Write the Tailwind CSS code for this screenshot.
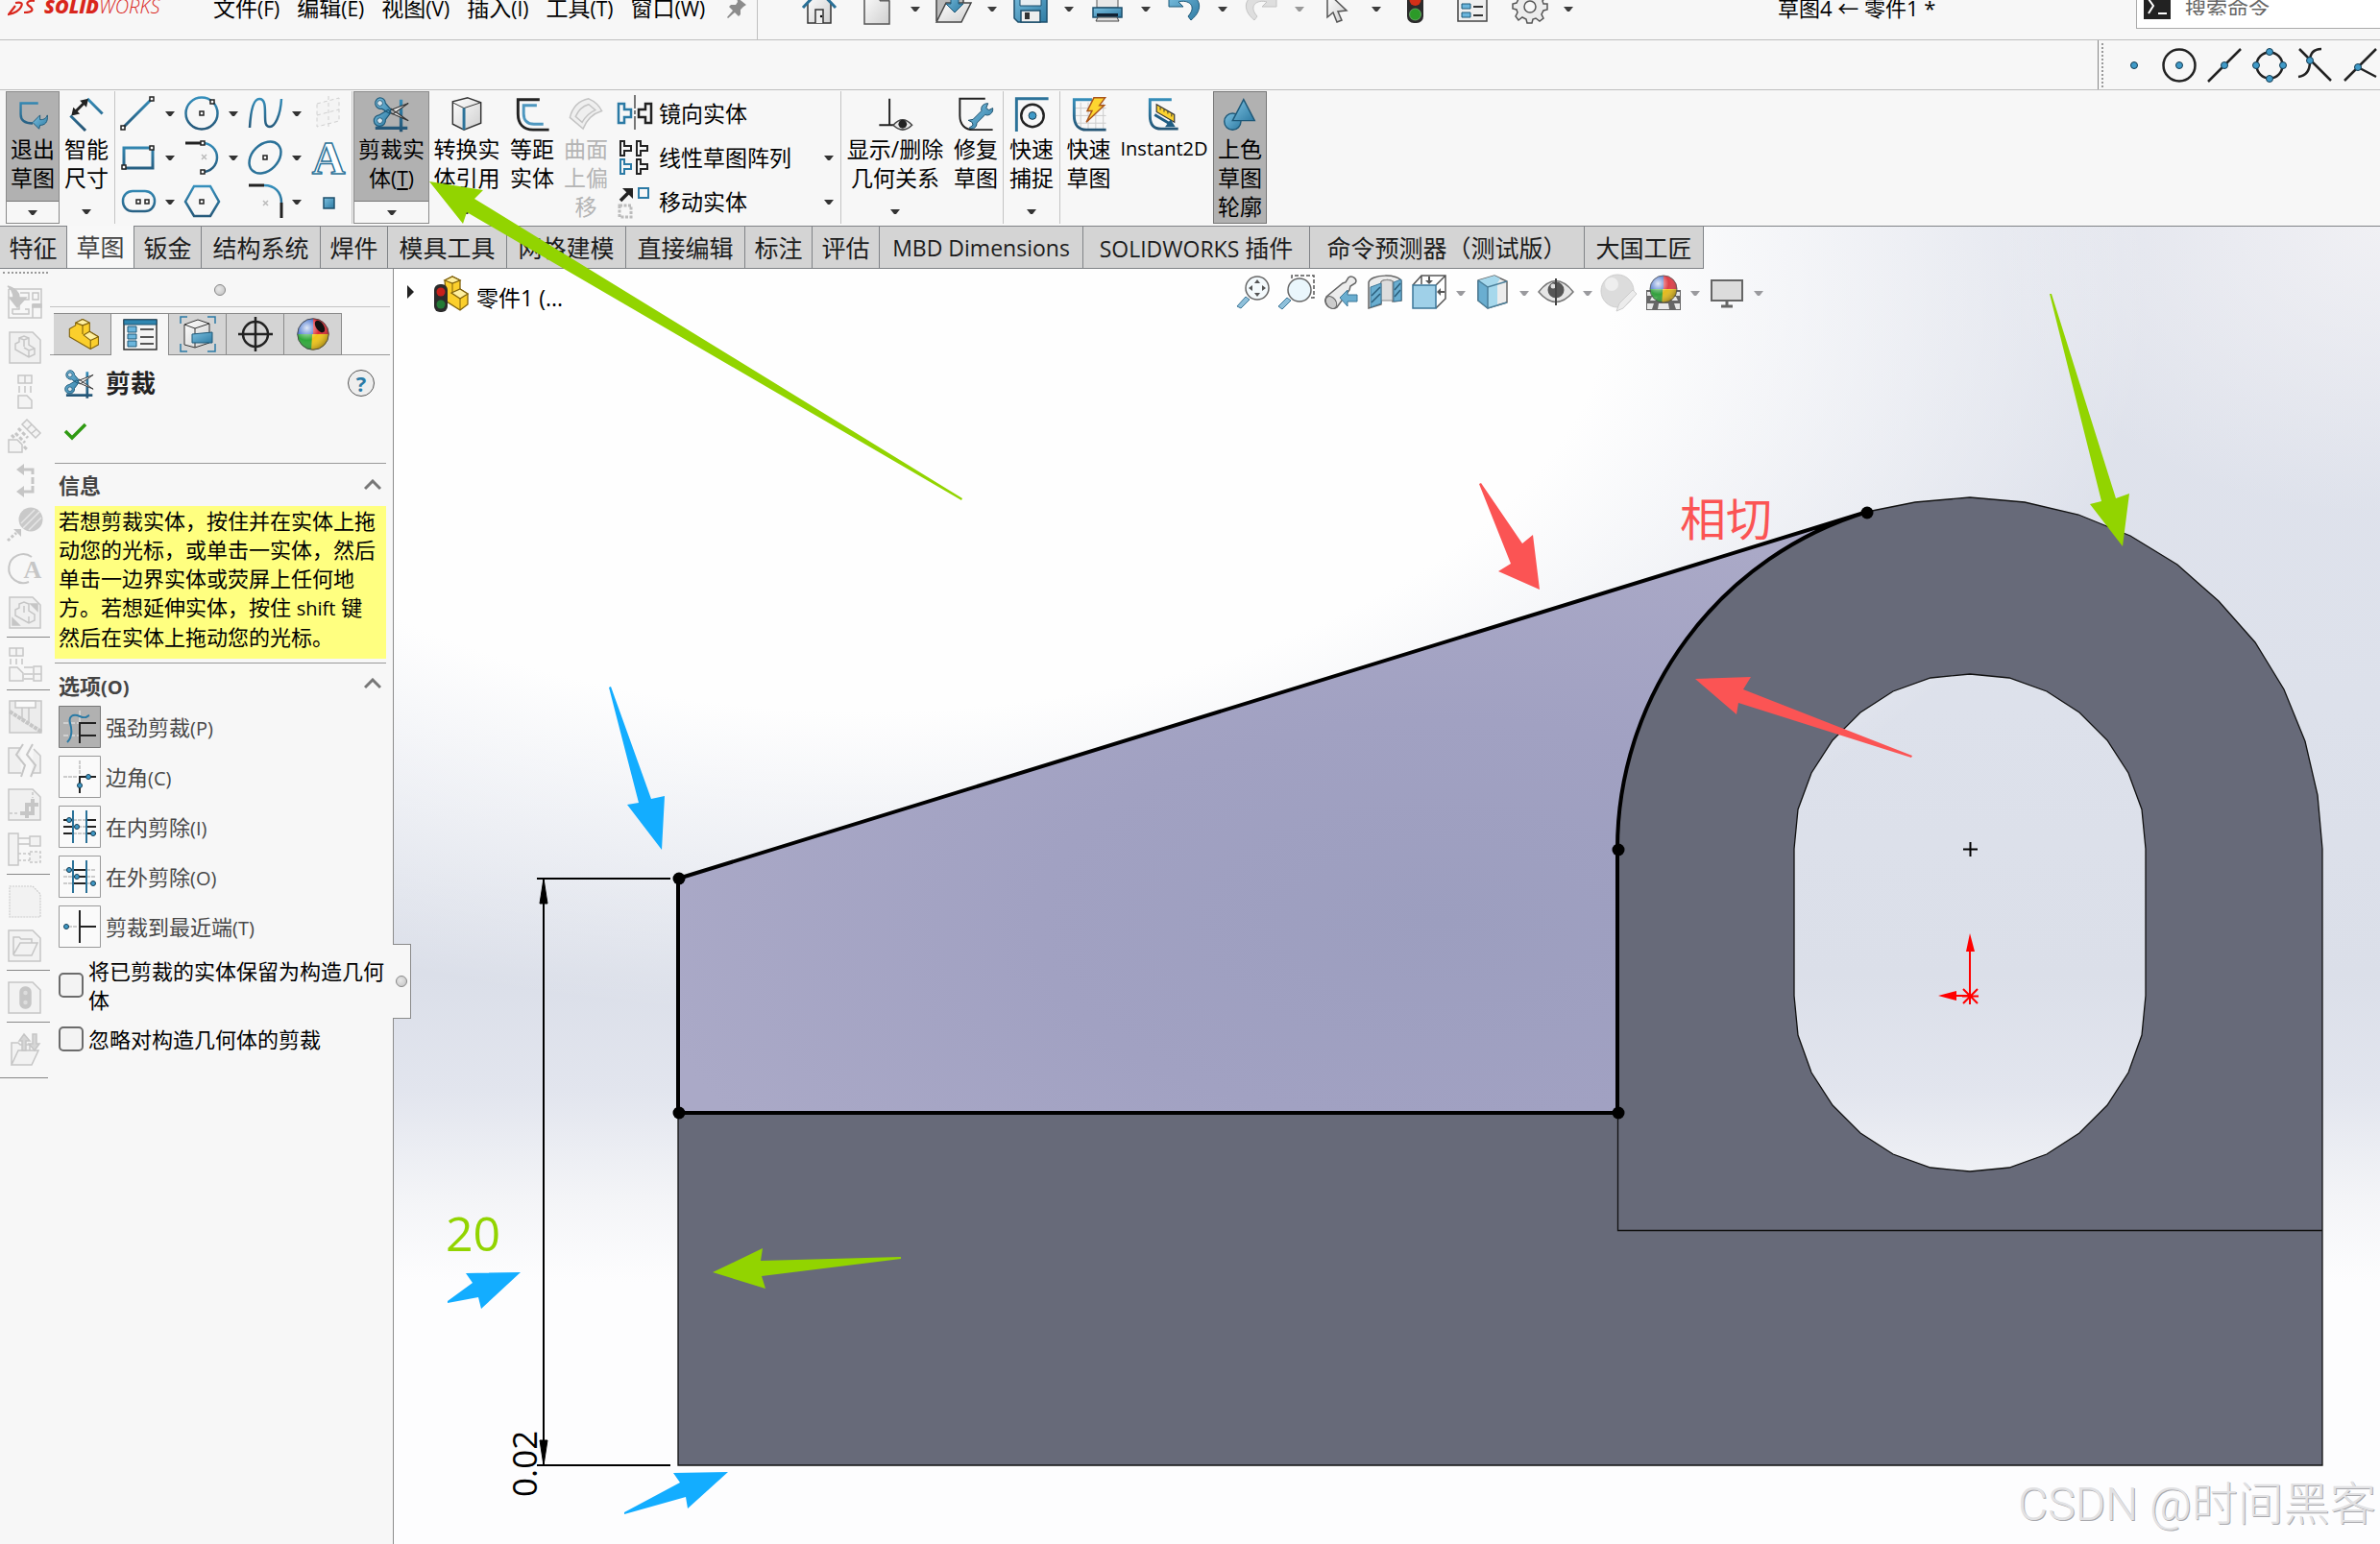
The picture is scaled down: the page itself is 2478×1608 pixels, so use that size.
<!DOCTYPE html>
<html lang="zh-CN">
<head>
<meta charset="utf-8">
<title>SOLIDWORKS 草图4 零件1</title>
<script src="https://cdn.jsdelivr.net/npm/@tailwindcss/browser@4"></script>
</head>
<body class="bg-[#f7f7f7] font-['Open_Sans','Noto_Sans_CJK_SC',sans-serif] text-black">
<svg class="absolute h-0 w-0" aria-hidden="true">
  <defs>
    <linearGradient id="b" gradientUnits="userSpaceOnUse" x1="0" y1="6" x2="0" y2="42"><stop offset="0" stop-color="#3590bd"/><stop offset="1" stop-color="#245373"/></linearGradient>
    <linearGradient id="bf" x1="0" y1="0" x2="1" y2="1"><stop offset="0" stop-color="#7cc0e0"/><stop offset="1" stop-color="#2e7ba3"/></linearGradient>
    <linearGradient id="gf" x1="0" y1="0" x2="1" y2="1"><stop offset="0" stop-color="#fff"/><stop offset="1" stop-color="#cfcfcf"/></linearGradient>
    <radialGradient id="sh" cx=".3" cy=".3" r=".8"><stop offset="0" stop-color="#fff" stop-opacity=".85"/><stop offset=".5" stop-color="#fff" stop-opacity="0"/><stop offset="1" stop-color="#000" stop-opacity=".35"/></radialGradient>
    <radialGradient id="knob" cx=".4" cy=".4" r=".7"><stop offset="0" stop-color="#e8e8e8"/><stop offset="1" stop-color="#c4c4c4"/></radialGradient>
    <radialGradient id="pur" gradientUnits="userSpaceOnUse" cx="1500" cy="960" r="420" gradientTransform="translate(1500 960) scale(2 1) translate(-1500 -960)"><stop offset="0" stop-color="#9c9ebf"/><stop offset=".5" stop-color="#a1a1c2"/><stop offset="1" stop-color="#aaa9c7"/></radialGradient>
  </defs>
  <symbol id="dn" viewBox="0 0 10 5"><path d="M0 0H10L6 5H4Z" fill="currentColor"/></symbol>
  <symbol id="scissors" viewBox="0 0 46 46">
    <path d="M33 8V43M5 39H40" stroke="url(#b)" stroke-width="3.5" fill="none"/>
    <path d="M18 21L41 12L24 24ZM18 21L41 31L22 18Z" fill="#eee" stroke="#333" stroke-width="1.2"/>
    <path d="M10 6a6 6 0 0 1 6 6l6 7-2 4-8-5a6 6 0 1 1-2-12zM10 37a6 6 0 0 1-1-12l10-6 3 3-6 8a6 6 0 0 1-6 7z" fill="url(#bf)" stroke="#1d5878" stroke-width="1.2"/>
    <circle cx="10" cy="12" r="3" fill="#d8e6ee" stroke="#1d5878"/><circle cx="10" cy="31" r="3" fill="#d8e6ee" stroke="#1d5878"/>
  </symbol>
  <symbol id="part" viewBox="0 0 46 46">
    <path d="M15 10L23 6L31 10V20L41 26V35L32 40L8 26V17L15 13Z" fill="#fbcf2c" stroke="#80620c" stroke-width="1.2" stroke-linejoin="round"/>
    <path d="M15 10L23 13L31 10L23 6ZM24 24L31 20L41 26L32 30Z" fill="#fff0a0" stroke="#80620c" stroke-width="1.2" stroke-linejoin="round"/>
    <path d="M23 13V23M32 30V40" stroke="#80620c" stroke-width="1.2"/>
  </symbol>
  <symbol id="ball" viewBox="0 0 46 46">
    <path d="M23 23V6A17 17 0 0 0 6 24Z" fill="#2f62c8"/><path d="M23 23V6A17 17 0 0 1 40 24Z" fill="#dc2a34"/>
    <path d="M23 23H6A17 17 0 0 0 22 40Z" fill="#2fa83a"/><path d="M22 23H40A17 17 0 0 1 21 40Z" fill="#f0c416"/>
    <circle cx="23" cy="23" r="17" fill="url(#sh)" stroke="#444"/>
  </symbol>
</svg>

<div class="relative flex min-h-screen flex-col overflow-hidden">

  <!-- Title bar -->
  <header class="flex h-[42px] items-start border-b border-[#bfbfbf]">
    <div class="flex h-[14px] w-[222px] shrink-0 items-center pl-2 text-[#d9261c]">
      <svg class="h-[34px] w-[30px] shrink-0" viewBox="0 0 30 34" fill="none" stroke="#d9261c" stroke-width="2.2"><path d="M8 13C14 12 16 13 14 17C12 21 6 24 1 25L8 16M28 11C22 10 18 13 22 16C28 20 26 23 17 23"/></svg>
      <span class="ml-2 text-xl leading-6 italic"><b class="font-extrabold">SOLID</b><span class="font-light">WORKS</span></span>
    </div>
    <nav class="flex h-[17px] w-[514px] shrink-0 items-center gap-[18px] text-[23px] leading-8 whitespace-nowrap">
      <a href="#">文件<span class="text-[21px]">(F)</span></a>
      <a href="#">编辑<span class="text-[21px]">(E)</span></a>
      <a href="#">视图<span class="text-[21px]">(V)</span></a>
      <a href="#">插入<span class="text-[21px]">(I)</span></a>
      <a href="#">工具<span class="text-[21px]">(T)</span></a>
      <a href="#">窗口<span class="text-[21px]">(W)</span></a>
    </nav>
    <div class="flex h-[41px] w-[53px] shrink-0 items-start justify-center border-r border-[#bfbfbf] pl-2">
      <svg class="h-6 w-6" viewBox="0 0 24 24" fill="#8c8c8c"><path d="M13 -3L23 5L20 7L17 10L17 15L15 17L11 13L4 19L3 18L9 11L5 7L7 5L12 5L14 2Z"/></svg>
    </div>
    <div class="flex h-[18px] w-[840px] shrink-0 items-center pl-[24px] text-[#3c3c3c]">
      <button aria-label="主页" class="w-20 shrink-0"><svg class="mx-auto h-[52px] w-10" viewBox="0 -17 40 52"><path d="M8 3L20 -8L32 3V24H8Z" fill="url(#gf)" stroke="#333" stroke-width="1.5"/><path d="M16 24V10H24V24" fill="#eee" stroke="#333" stroke-width="1.5"/><path d="M3 8L20 -10L37 8" fill="none" stroke="#286f96" stroke-width="3"/><circle cx="22" cy="17" r="1.2"/></svg></button>
      <button aria-label="新建" class="w-10 shrink-0"><svg class="h-[52px] w-10" viewBox="0 -17 40 52"><path d="M7 -10H24L33 1V25H7Z" fill="url(#gf)" stroke="#555" stroke-width="1.5"/><path d="M23 -8V1H33" fill="#777" stroke="#555"/></svg></button>
      <span class="flex w-10 shrink-0 justify-center"><svg class="h-[5px] w-[10px]"><use href="#dn"/></svg></span>
      <button aria-label="打开" class="w-10 shrink-0"><svg class="h-[52px] w-10" viewBox="0 -17 40 52"><path d="M2 22V-6H30V4" fill="#bbb" stroke="#444" stroke-width="1.5"/><path d="M2 23L12 3H38L28 23Z" fill="url(#gf)" stroke="#444" stroke-width="1.5"/><path d="M17 -8H25V4H30L21 13L12 4H17Z" fill="url(#bf)" stroke="#1d5878"/></svg></button>
      <span class="flex w-10 shrink-0 justify-center"><svg class="h-[5px] w-[10px]"><use href="#dn"/></svg></span>
      <button aria-label="保存" class="w-10 shrink-0"><svg class="h-[52px] w-10" viewBox="0 -17 40 52"><path d="M3 -10H37V23H7L3 19Z" fill="url(#bf)" stroke="#1d4f6c" stroke-width="1.5"/><path d="M9 -8H31V6H9Z" fill="#e8eef2" stroke="#1d4f6c"/><path d="M10 11H30V23H10Z" fill="#eee" stroke="#1d4f6c" stroke-width="1.5"/><path d="M14 13H19V20H14Z" fill="#333"/></svg></button>
      <span class="flex w-10 shrink-0 justify-center"><svg class="h-[5px] w-[10px]"><use href="#dn"/></svg></span>
      <button aria-label="打印" class="w-10 shrink-0"><svg class="h-[52px] w-10" viewBox="0 -17 40 52"><path d="M9 -10H31V8H9Z" fill="#e8e8e8" stroke="#555"/><path d="M5 8H35V18H5Z" fill="url(#bf)" stroke="#1d4f6c" stroke-width="1.5"/><path d="M9 14H31V17H9Z" fill="#123"/><path d="M10 18H30L32 22H8Z" fill="#ddd" stroke="#444"/></svg></button>
      <span class="flex w-10 shrink-0 justify-center"><svg class="h-[5px] w-[10px]"><use href="#dn"/></svg></span>
      <button aria-label="撤消" class="w-10 shrink-0"><svg class="h-[52px] w-10" viewBox="0 -17 40 52"><path d="M4 -8V7H19L14 2C24 -1 34 6 24 17L27 21C42 9 36 -6 20 -6L10 -3Z" fill="url(#bf)" stroke="#1d5878"/></svg></button>
      <span class="flex w-10 shrink-0 justify-center"><svg class="h-[5px] w-[10px]"><use href="#dn"/></svg></span>
      <button aria-label="重做" class="w-10 shrink-0"><svg class="h-[52px] w-10" viewBox="0 -17 40 52"><path d="M36 -8V7H21L26 2C16 -1 6 6 16 17L13 21C-2 9 4 -6 20 -6L30 -3Z" fill="#dedede" stroke="#c4c4c4"/></svg></button>
      <span class="flex w-10 shrink-0 justify-center text-[#999]"><svg class="h-[5px] w-[10px]"><use href="#dn"/></svg></span>
      <button aria-label="选择" class="w-10 shrink-0"><svg class="h-[52px] w-10" viewBox="0 -17 40 52"><path d="M9 -8V18L15 13L19 23L24 21L20 12L29 11Z" fill="url(#gf)" stroke="#555" stroke-width="1.5"/></svg></button>
      <span class="flex w-10 shrink-0 justify-center"><svg class="h-[5px] w-[10px]"><use href="#dn"/></svg></span>
      <button aria-label="重建" class="w-10 shrink-0"><svg class="h-[52px] w-10" viewBox="0 -17 40 52"><rect x="12" y="-14" width="17" height="38" rx="7" fill="#2b2b2b"/><circle cx="20.500" cy="0" r="6" fill="#d33018"/><circle cx="20.500" cy="15" r="6" fill="#2c9a28" stroke="#8c8" stroke-width=".6"/></svg></button>
      <button aria-label="文件属性" class="w-20 shrink-0"><svg class="mx-auto h-[52px] w-10" viewBox="0 -17 40 52"><path d="M5 -10H35V22H5Z" fill="#f0f0f0" stroke="#444" stroke-width="1.500"/><path d="M9 4H18V9H9ZM9 13H18V18H9Z" fill="#6bb5dc" stroke="#1d5878"/><path d="M21 7H31M21 16H31" stroke="#333" stroke-width="2"/></svg></button>
      <button aria-label="选项" class="w-10 shrink-0"><svg class="h-[52px] w-10" viewBox="0 -17 40 52"><path d="M17 -10H23L24 -6L28 -4L32 -7L36 -3L33 1L34 4H38V10L34 11L32 15L34 19L30 22L26 19L23 20L22 24H17L16 20L12 18L8 21L5 17L7 13L6 10L2 9V4L6 3L8 -1L5 -4L9 -8L13 -5L16 -6Z" fill="#ececec" stroke="#555" stroke-width="1.5"/><circle cx="20" cy="7" r="6" fill="#f7f7f7" stroke="#555" stroke-width="1.5"/></svg></button>
      <span class="flex w-10 shrink-0 justify-center"><svg class="h-[5px] w-[10px]"><use href="#dn"/></svg></span>
    </div>
    <p class="ml-[222px] h-4 shrink-0 text-[22px] leading-4 whitespace-nowrap">草图4 ← 零件1 *</p>
    <div class="ml-auto flex h-[30px] w-[254px] shrink-0 items-start border-b border-l border-[#aaa] bg-white pl-[7px]">
      <svg class="h-5 w-7 shrink-0" viewBox="0 0 28 20"><path d="M0 0H28V20H0Z" fill="#222"/><path d="M5 -1L10 6L5 14" stroke="#fff" stroke-width="2" fill="none"/><path d="M15 14H24" stroke="#fff" stroke-width="2"/></svg>
      <input type="text" aria-label="搜索命令" placeholder="搜索命令" class="ml-[15px] h-4 w-48 text-[22px] leading-4 outline-none placeholder:text-[#666]">
    </div>
  </header>

  <!-- Snap toolbar -->
  <div class="flex h-[52px] justify-end border-b border-[#bfbfbf]">
    <div class="flex w-[294px] items-center border-l border-[#888] pl-[3px]">
      <span class="h-[46px] border-l-2 border-dotted border-[#999]"></span>
      <div class="ml-2 flex">
        <button aria-label="点" class="w-[47px]"><svg class="mx-auto h-[46px] w-[46px]" viewBox="0 0 46 46"><circle cx="23" cy="23" r="3.500" fill="#3f9ac8" stroke="#153c52"/></svg></button>
        <button aria-label="圆心" class="w-[47px]"><svg class="mx-auto h-[46px] w-[46px]" viewBox="0 0 46 46"><circle cx="23" cy="23" r="16.500" fill="none" stroke="#222" stroke-width="2.500"/><circle cx="23" cy="23" r="3.500" fill="#3f9ac8" stroke="#153c52"/></svg></button>
        <button aria-label="中点" class="w-[47px]"><svg class="mx-auto h-[46px] w-[46px]" viewBox="0 0 46 46"><path d="M6 40L40 6" stroke="#222" stroke-width="2.500"/><circle cx="23" cy="23" r="3.500" fill="#3f9ac8" stroke="#153c52"/></svg></button>
        <button aria-label="象限点" class="w-[47px]"><svg class="mx-auto h-[46px] w-[46px]" viewBox="0 0 46 46"><circle cx="23" cy="23" r="13.500" fill="none" stroke="#222" stroke-width="2.500"/><g fill="#3f9ac8" stroke="#153c52"><circle cx="23" cy="9" r="3.500"/><circle cx="23" cy="37" r="3.500"/><circle cx="9" cy="23" r="3.500"/><circle cx="37" cy="23" r="3.500"/></g></svg></button>
        <button aria-label="交叉点" class="w-[47px]"><svg class="mx-auto h-[46px] w-[46px]" viewBox="0 0 46 46"><path d="M7 6L40 39M6 35C14 34 18 28 18 19C18 10 22 6 30 6" fill="none" stroke="#222" stroke-width="2.500"/><circle cx="18" cy="18" r="3.500" fill="#3f9ac8" stroke="#153c52"/></svg></button>
        <button aria-label="最近端点" class="w-[47px]"><svg class="mx-auto h-[46px] w-[46px]" viewBox="0 0 46 46"><path d="M7 39L40 6M21 25L40 35" stroke="#222" stroke-width="2.500"/><circle cx="21" cy="25" r="3.500" fill="#3f9ac8" stroke="#153c52"/></svg></button>
      </div>
    </div>
  </div>

  <!-- Command ribbon -->
  <div class="flex h-[142px] items-start border-b border-[#808387] pt-px pl-[6px] text-[23px] leading-[30px] whitespace-nowrap text-black">
    <div class="flex h-[138px] w-[56px] shrink-0 flex-col border border-[#8a8a8a]">
      <button class="flex h-[114px] flex-col items-center border-b border-[#777] bg-[#b1b1b1]"><svg class="h-[44px] w-[46px] shrink-0" viewBox="0 0 46 46"><path d="M29 12H10V24C10 31 14 34 23 34" fill="none" stroke="url(#b)" stroke-width="2.5"/><path d="M23 33L31 25V30C36 30 38 28 39 25C40 33 36 36 31 36L30 40Z" fill="url(#bf)" stroke="#1d5878"/></svg>退出<br>草图</button>
      <button aria-label="退出选项" class="flex flex-1 items-center justify-center text-[#333]"><svg class="h-[5px] w-[10px]"><use href="#dn"/></svg></button>
    </div>
    <button class="flex h-[138px] w-[56px] shrink-0 flex-col items-center"><svg class="h-[45px] w-[46px] shrink-0" viewBox="0 0 46 46"><path d="M24 8L40 24M6 26L22 42" stroke="url(#b)" stroke-width="3"/><path d="M11 22L21 12" stroke="#222" stroke-width="3"/><path d="M7 26L9 17L16 24ZM25 8L23 17L16 10Z" fill="#222"/></svg>智能<br>尺寸<svg class="mt-[18px] h-[5px] w-[10px] text-[#333]"><use href="#dn"/></svg></button>
    <div class="ml-px grid h-[138px] shrink-0 grid-cols-[48px_18px_48px_18px_48px_18px_48px] items-center justify-items-center border-x border-[#c4c4c4] text-[#333]">
      <button aria-label="直线"><svg class="h-[46px] w-[46px]" viewBox="0 0 46 46"><path d="M7 38L37 8" stroke="url(#b)" stroke-width="3"/><path d="M5 36h4v4h-4zM35 6h4v4h-4z" fill="#fff" stroke="#222" stroke-width="1.500"/></svg></button>
      <svg class="h-[5px] w-[10px]"><use href="#dn"/></svg>
      <button aria-label="圆"><svg class="h-[46px] w-[46px]" viewBox="0 0 46 46"><circle cx="23" cy="23" r="16.500" fill="none" stroke="url(#b)" stroke-width="2.500"/><path d="M32 9h4v4h-4zM21 21h4v4h-4z" fill="#fff" stroke="#222" stroke-width="1.500"/></svg></button>
      <svg class="h-[5px] w-[10px]"><use href="#dn"/></svg>
      <button aria-label="样条曲线"><svg class="h-[46px] w-[46px]" viewBox="0 0 46 46"><path d="M7 38C8 20 11 8 17 8S23 16 23 24S23 37 28 37S39 26 40 8" fill="none" stroke="url(#b)" stroke-width="2.500"/></svg></button>
      <svg class="h-[5px] w-[10px]"><use href="#dn"/></svg>
      <button aria-label="基准面"><svg class="h-[46px] w-[46px]" viewBox="0 0 46 46"><path d="M11 13L34 7V31L11 37ZM11 25L34 19M23 5V39" fill="#f4f4f4" stroke="#d0d0d0" stroke-dasharray="4 3"/></svg></button>
      <button aria-label="矩形"><svg class="h-[46px] w-[46px]" viewBox="0 0 46 46"><path d="M8 13H38V34H8Z" fill="none" stroke="url(#b)" stroke-width="3"/><path d="M6 31h4v4h-4zM35 11h4v4h-4z" fill="#fff" stroke="#222" stroke-width="1.500"/></svg></button>
      <svg class="h-[5px] w-[10px]"><use href="#dn"/></svg>
      <button aria-label="圆弧"><svg class="h-[46px] w-[46px]" viewBox="0 0 46 46"><path d="M6 8H24" stroke="#222" stroke-width="3"/><path d="M24 8A15 15 0 0 1 24 38" fill="none" stroke="url(#b)" stroke-width="2.500"/><path d="M22 6h4v4h-4zM22 36h4v4h-4z" fill="#fff" stroke="#222" stroke-width="1.500"/><path d="M23 20l5 5m0-5l-5 5" stroke="#bbb" stroke-width="1.500"/></svg></button>
      <svg class="h-[5px] w-[10px]"><use href="#dn"/></svg>
      <button aria-label="椭圆"><svg class="h-[46px] w-[46px]" viewBox="0 0 46 46"><ellipse cx="23" cy="23" rx="19" ry="13.500" transform="rotate(-45 23 23)" fill="none" stroke="#2b7299" stroke-width="2.500"/><path d="M21 21h4v4h-4z" fill="#fff" stroke="#222" stroke-width="1.500"/></svg></button>
      <svg class="h-[5px] w-[10px]"><use href="#dn"/></svg>
      <button aria-label="文字"><svg class="h-[46px] w-[46px]" viewBox="0 0 46 46"><text x="23" y="40" text-anchor="middle" font-family="Liberation Serif,serif" font-weight="bold" font-size="48" fill="#fff" stroke="#2b7299" stroke-width="1.500">A</text></svg></button>
      <button aria-label="槽口"><svg class="h-[46px] w-[46px]" viewBox="0 0 46 46"><rect x="7" y="12" width="33" height="21" rx="10" fill="none" stroke="url(#b)" stroke-width="2.500"/><path d="M21 21h4v4h-4zM30 21h4v4h-4z" fill="#fff" stroke="#222" stroke-width="1.500"/></svg></button>
      <svg class="h-[5px] w-[10px]"><use href="#dn"/></svg>
      <button aria-label="多边形"><svg class="h-[46px] w-[46px]" viewBox="0 0 46 46"><path d="M6 23L15 7H32L41 23L32 38H15Z" fill="none" stroke="url(#b)" stroke-width="2.500"/><path d="M21 21h4v4h-4z" fill="#fff" stroke="#222" stroke-width="1.500"/></svg></button>
      <span></span>
      <button aria-label="圆角"><svg class="h-[46px] w-[46px]" viewBox="0 0 46 46"><path d="M6 6H22M40 24V40" stroke="#222" stroke-width="3"/><path d="M22 6C33 6 40 13 40 24" fill="none" stroke="url(#b)" stroke-width="2.500"/><path d="M21 22l5 5m0-5l-5 5" stroke="#bbb" stroke-width="1.500"/></svg></button>
      <svg class="h-[5px] w-[10px]"><use href="#dn"/></svg>
      <button aria-label="点"><svg class="h-[46px] w-[46px]" viewBox="0 0 46 46"><path d="M18 19h11v11h-11z" fill="url(#bf)" stroke="#1d4f6c" stroke-width="1.500"/></svg></button>
    </div>
    <div class="ml-px flex h-[138px] w-[79px] shrink-0 flex-col border border-[#8a8a8a]">
      <button class="flex h-[114px] flex-col items-center border-b border-[#777] bg-[#b1b1b1]"><svg class="h-[44px] w-[46px] shrink-0"><use href="#scissors"/></svg>剪裁实<span>体<span class="text-[21px]">(<u class="underline-offset-2">T</u>)</span></span></button>
      <button aria-label="剪裁选项" class="flex flex-1 items-center justify-center text-[#333]"><svg class="h-[5px] w-[10px]"><use href="#dn"/></svg></button>
    </div>
    <button class="flex h-[138px] w-[78px] shrink-0 flex-col items-center"><svg class="h-[45px] w-[46px] shrink-0" viewBox="0 0 46 46"><path d="M24 7L38 12V34L20 41L8 35V11Z" fill="url(#gf)" stroke="#333" stroke-width="1.500"/><path d="M8 12L20 18L38 12" fill="none" stroke="#333"/><path d="M20 18V41" stroke="#2b7299" stroke-width="3"/></svg>转换实<br>体引用<svg class="mt-[18px] h-[5px] w-[10px] text-[#333]"><use href="#dn"/></svg></button>
    <button class="flex h-[138px] w-[58px] shrink-0 flex-col items-center"><svg class="h-[45px] w-[46px] shrink-0" viewBox="0 0 46 46" fill="none" stroke-width="3"><path d="M31 9H8V24C8 35 14 41 24 41H41" stroke="#222"/><path d="M28 15H14V24C14 31 18 35 25 35H35" stroke="#4e97bf"/></svg>等距<br>实体</button>
    <button class="flex h-[138px] w-[54px] shrink-0 flex-col items-center text-[#b4b4b4]" disabled><svg class="h-[45px] w-[46px] shrink-0" viewBox="0 0 46 46" fill="#efefef" stroke="#c4c4c4" stroke-width="1.500"><path d="M26 8C33 11 37 15 40 21C30 24 24 30 20 40L6 28C9 16 16 10 26 8Z"/><path d="M26 14L33 20C26 23 22 28 19 33L12 27C15 20 19 16 26 14Z"/></svg>曲面<br>上偏<br>移</button>
    <div class="grid h-[138px] w-[239px] shrink-0 grid-rows-3 border-r border-[#c4c4c4]">
      <div class="flex items-center"><button class="flex items-center gap-[3px]"><svg class="h-[46px] w-[46px]" viewBox="0 0 46 46" fill="none" stroke-width="2.500"><path d="M7 13h6v6h7v8h-7v6h-6z" stroke="#2b7aa5"/><path d="M41 13h-6v6h-7v8h7v6h6z" stroke="#222"/><path d="M24 4V42" stroke="#222" stroke-width="1.200" stroke-dasharray="14 2 4 2"/></svg>镜向实体</button></div>
      <div class="flex items-center"><button class="flex items-center gap-[3px]"><svg class="h-[46px] w-[46px]" viewBox="0 0 46 46" fill="none" stroke="#222" stroke-width="2"><path d="M9 6h4v5h7v5h-7v5h-4zM26 6h4v5h7v5h-7v5h-4zM26 25h4v5h7v5h-7v5h-4z"/><path d="M9 25h4v5h7v5h-7v5h-4z" stroke="#2b7aa5"/></svg>线性草图阵列</button><span class="ml-auto flex w-6 justify-center text-[#333]"><svg class="h-[5px] w-[10px]"><use href="#dn"/></svg></span></div>
      <div class="flex items-center"><button class="flex items-center gap-[3px]"><svg class="h-[46px] w-[46px]" viewBox="0 0 46 46" fill="none"><path d="M9 22L17 14" stroke="#222" stroke-width="3.500"/><path d="M11 9H22V20Z" fill="#222"/><path d="M28 9h10v10h-10z" stroke="#2b7aa5" stroke-width="2"/><path d="M8 27h12v12h-12z" stroke="#bcbcbc" stroke-width="3" stroke-dasharray="3 1.500"/></svg>移动实体</button><span class="ml-auto flex w-6 justify-center text-[#333]"><svg class="h-[5px] w-[10px]"><use href="#dn"/></svg></span></div>
    </div>
    <button class="flex h-[138px] w-[112px] shrink-0 flex-col items-center"><svg class="h-[45px] w-[46px] shrink-0" viewBox="0 0 46 46"><path d="M17 8V36M6 36H24" stroke="#222" stroke-width="2"/><path d="M21 36Q31 25 41 36Q31 46 21 36Z" fill="#e8e8e8" stroke="#444" stroke-width="1.500"/><circle cx="31" cy="35" r="4.500" fill="#222"/></svg>显示/删除<span>几何关系</span><svg class="mt-[18px] h-[5px] w-[10px] text-[#333]"><use href="#dn"/></svg></button>
    <button class="flex h-[138px] w-[57px] shrink-0 flex-col items-center border-r border-[#c4c4c4]"><svg class="h-[45px] w-[46px] shrink-0" viewBox="0 0 46 46"><path d="M33 8H6V26C6 36 12 41 20 41H41" fill="none" stroke="#222" stroke-width="2"/><path d="M15 31L20 30L29 21C28 16 31 13 36 13L34 18L37 20L41 18C42 23 37 27 33 25L24 34C24 39 20 41 16 39L20 36L19 33Z" fill="url(#bf)" stroke="#1d4f6c"/></svg>修复<br>草图</button>
    <button class="flex h-[138px] w-[59px] shrink-0 flex-col items-center border-r border-[#c4c4c4]"><svg class="h-[45px] w-[46px] shrink-0" viewBox="0 0 46 46"><path d="M7 43V8H41" fill="none" stroke="#2b7299" stroke-width="3"/><circle cx="24" cy="26" r="12" fill="none" stroke="#222" stroke-width="2.500"/><circle cx="24" cy="26" r="4" fill="#3f9ac8" stroke="#153c52"/></svg>快速<br>捕捉<svg class="mt-[18px] h-[5px] w-[10px] text-[#333]"><use href="#dn"/></svg></button>
    <button class="flex h-[138px] w-[59px] shrink-0 flex-col items-center"><svg class="h-[45px] w-[46px] shrink-0" viewBox="0 0 46 46"><path d="M14 12V42M22 12V42M30 12V42M38 12V42M8 18H41M8 26H41M8 34H41" stroke="#ccc"/><path d="M26 9H7V26C7 36 12 41 20 41H41" fill="none" stroke="url(#b)" stroke-width="3"/><path d="M28 7H40L34 15H39L20 33L26 21H21Z" fill="#fdd530" stroke="#a8531a" stroke-width="1.500"/></svg>快速<br>草图</button>
    <button class="flex h-[138px] w-[98px] shrink-0 flex-col items-center"><svg class="h-[45px] w-[46px] shrink-0" viewBox="0 0 46 46"><path d="M31 9H8V26C8 36 12 40 20 40H38" fill="none" stroke="url(#b)" stroke-width="3"/><path d="M15 14L34 25V33L15 22Z" fill="#fbd230" stroke="#333" stroke-width="1.200"/><path d="M19 17v3m4-1v3m4-1v3m4 0v3" stroke="#333"/><path d="M13 25L28 34" stroke="#1f5d83" stroke-width="3"/><path d="M35 38H24L30 30Z" fill="#1f5d83"/></svg><span class="text-xl leading-[30px]">Instant2D</span></button>
    <button class="ml-[2px] flex h-[138px] w-[56px] shrink-0 flex-col items-center border border-[#777] bg-[#b1b1b1]"><svg class="h-[44px] w-[46px] shrink-0" viewBox="0 0 46 46" fill="url(#bf)" stroke="#1d5878" stroke-width="1.500"><circle cx="15" cy="32" r="9"/><path d="M27 8L39 31H15Z"/></svg>上色<br>草图<br>轮廓</button>
  </div>

  <!-- Workspace -->
  <div class="flex flex-1 flex-col bg-[radial-gradient(1340px_760px_at_900px_64px,#fefefe_58%,#fefefe00_100%),radial-gradient(400px_300px_at_100%_0,#f0f0f4_0,#f0f0f400_100%),linear-gradient(to_bottom,#e0e3ec_0,#dde1eb_500px,#dbdfe9_780px,#e2e5ee_900px,#f3f4f7_1010px,#fdfdfe_1100px)]">
    <nav class="relative flex h-[44px] text-[25px] leading-[44px] whitespace-nowrap text-[#1c1c1c]">
      <button class="w-[70px] shrink-0 border-r border-b border-[#808387] bg-[#d4d4d4]">特征</button>
      <button class="relative -mt-px h-[45px] w-[69px] shrink-0 border-b border-[#808387] bg-[#f8f8f8] text-[#444]">草图</button>
      <button class="w-[71px] shrink-0 border-x border-b border-[#808387] bg-[#d4d4d4]">钣金</button>
      <button class="w-[124px] shrink-0 border-r border-b border-[#808387] bg-[#d4d4d4]">结构系统</button>
      <button class="w-[70px] shrink-0 border-r border-b border-[#808387] bg-[#d4d4d4]">焊件</button>
      <button class="w-[124px] shrink-0 border-r border-b border-[#808387] bg-[#d4d4d4]">模具工具</button>
      <button class="w-[124px] shrink-0 border-r border-b border-[#808387] bg-[#d4d4d4]">网格建模</button>
      <button class="w-[124px] shrink-0 border-r border-b border-[#808387] bg-[#d4d4d4]">直接编辑</button>
      <button class="w-[70px] shrink-0 border-r border-b border-[#808387] bg-[#d4d4d4]">标注</button>
      <button class="w-[70px] shrink-0 border-r border-b border-[#808387] bg-[#d4d4d4]">评估</button>
      <button class="w-[212px] shrink-0 border-r border-b border-[#808387] bg-[#d4d4d4] text-[23px]">MBD Dimensions</button>
      <button class="w-[236px] shrink-0 border-r border-b border-[#808387] bg-[#d4d4d4]"><span class="text-[23px]">SOLIDWORKS </span>插件</button>
      <button class="w-[286px] shrink-0 border-r border-b border-[#808387] bg-[#d4d4d4]">命令预测器（测试版）</button>
      <button class="w-[124px] shrink-0 border-r border-b border-[#808387] bg-[#d4d4d4]">大国工匠</button>
    </nav>

    <div class="flex flex-1">
      <!-- Icon rail -->
      <div class="flex w-[52px] shrink-0 flex-col items-center bg-[#f7f7f7]">
        <span class="mt-[3px] mb-[8px] w-[47px] border-t-2 border-dotted border-[#999]"></span>
        <svg class="h-[46px] w-[46px]" viewBox="0 0 46 46" fill="none" stroke="#c6c6c6" stroke-width="1.500"><path d="M6 8H40V38H6V8M18 12H27V19H21M31 12H37V19H31ZM31 24H40M31 38V24M10 34V29H17V22M10 34H27V29H23"/><path d="M31 24H40V27H31ZM5 5C12 7 17 10 17 17H24L15 27L7 17H11C11 11 9 8 5 5Z" fill="#c6c6c6"/></svg>
        <svg class="h-[46px] w-[46px]" viewBox="0 0 46 46" fill="#f0f0f0" stroke="#c6c6c6" stroke-width="1.500"><path d="M7 7H31L39 15V39H7Z"/><path d="M17 13L22 11L27 13V20L33 24V30L27 33L13 25V19L17 17ZM17 13L22 15L27 13M22 15V22M22 23L27 26L33 24M27 26V33"/></svg>
        <svg class="h-[46px] w-[46px]" viewBox="0 0 46 46" fill="#f4f4f4" stroke="#c6c6c6" stroke-width="1.500"><path d="M16 6H30V14H16ZM23 6V14M17 17V24M23 17V24M29 17V24M16 27H25L30 32V40H16Z"/></svg>
        <svg class="h-[46px] w-[46px]" viewBox="0 0 46 46" fill="#f4f4f4" stroke="#c6c6c6" stroke-width="1.500"><path d="M25 6L39 20L34 25L20 11ZM30 11L25 16M35 16L29 21M6 27H15L20 32V40H6Z"/><path d="M16 15L26 25M13 20L23 30M9 22L12 25M22 34L25 37" stroke-width="3" stroke-dasharray="4 2"/></svg>
        <svg class="h-[46px] w-[46px]" viewBox="0 0 46 46" fill="none" stroke="#c6c6c6" stroke-width="3"><path d="M22 12H31V17M31 20V27M31 29V35H22"/><path d="M14 12L22 6V18ZM14 35L22 29V41Z" fill="#c6c6c6" stroke="none"/></svg>
        <svg class="h-[46px] w-[46px]" viewBox="0 0 46 46"><circle cx="29" cy="18" r="12.500" fill="#c9c9c9"/><path d="M19 22L33 8M21 27L38 10M27 29L40 16" stroke="#e6e6e6" stroke-width="1.500"/><path d="M11 28L19 28V36Z" fill="#c6c6c6"/><path d="M5 40L14 32" stroke="#c6c6c6" stroke-width="3" stroke-dasharray="3 2"/></svg>
        <svg class="h-[46px] w-[46px]" viewBox="0 0 46 46"><path d="M30 11A15 15 0 1 0 27 37" fill="none" stroke="#c6c6c6" stroke-width="2"/><text x="31" y="33" text-anchor="middle" font-family="Liberation Serif,serif" font-weight="bold" font-size="26" fill="#c6c6c6">A</text></svg>
        <svg class="h-[46px] w-[46px]" viewBox="0 0 46 46" fill="#f0f0f0" stroke="#c6c6c6" stroke-width="1.500"><path d="M7 7H31L39 15V39H7Z"/><path d="M17 14L22 12L27 14V21L33 25V31L27 34L13 26V20L17 18ZM22 16V23M27 27V34"/><path d="M36 14H29L36 21ZM10 36H17L10 29Z" fill="#c6c6c6"/></svg>
        <span class="mt-[2px] mb-[6px] h-px w-[45px] self-end bg-[#888]"></span>
        <svg class="h-[46px] w-[46px]" viewBox="0 0 46 46" fill="#f4f4f4" stroke="#c6c6c6" stroke-width="1.500"><path d="M7 5H21V13H7ZM14 5V13M8 16V22M14 16V22M20 16V22M7 25H15L21 31V39H7ZM22 25H31M22 32H31M22 37H31M32 24H40V39H32ZM32 32H40"/></svg>
        <span class="mt-[2px] mb-[5px] h-px w-[45px] self-end bg-[#888]"></span>
        <svg class="h-[46px] w-[46px]" viewBox="0 0 46 46" fill="#ececec" stroke="#c6c6c6" stroke-width="1.500"><path d="M7 6H40V39H7Z"/><path d="M13 6H34V13H13ZM20 13V25M27 13V29" fill="#fafafa"/><path d="M7 17L40 38" stroke-width="4" stroke-dasharray="4 1"/></svg>
        <svg class="h-[46px] w-[46px]" viewBox="0 0 46 46" fill="#f0f0f0" stroke="#c6c6c6" stroke-width="1.500"><path d="M18 9H6V35H19M32 10L39 17V35H30"/><path d="M21 5L14 16L23 27L19 39M31 5L25 16L34 27L29 39" fill="none" stroke-width="2"/></svg>
        <svg class="h-[46px] w-[46px]" viewBox="0 0 46 46" fill="#f0f0f0" stroke="#c6c6c6" stroke-width="1.500"><path d="M6 6H31L39 14V38H6Z"/><path d="M25 36V22H37M31 16V31H18" fill="none" stroke-width="4"/><path d="M7 31H16M31 9V15" stroke-dasharray="3 2"/></svg>
        <svg class="h-[46px] w-[46px]" viewBox="0 0 46 46" fill="#f2f2f2" stroke="#c6c6c6" stroke-width="1.500"><path d="M6 6H16V39H6ZM28 9H39V19H28ZM16 11H28M16 17H28"/><path d="M28 25H39V36H28ZM16 27H28M16 34H28" stroke-dasharray="3 2"/></svg>
        <span class="mt-[2px] mb-[5px] h-px w-[45px] self-end bg-[#888]"></span>
        <svg class="h-[46px] w-[46px]" viewBox="0 0 46 46" fill="#f2f2f2" stroke="#ccc" stroke-width="1.200"><path d="M7 7H31L39 15V39H7Z" stroke-dasharray="2 1"/></svg>
        <svg class="h-[46px] w-[46px]" viewBox="0 0 46 46" fill="#f2f2f2" stroke="#c6c6c6" stroke-width="1.500"><path d="M6 7H31L39 15V39H6Z"/><path d="M11 32V14H17L19 16H30V20M11 32L18 20H36L30 33H12Z"/></svg>
        <span class="mt-[2px] mb-[5px] h-px w-[45px] self-end bg-[#888]"></span>
        <svg class="h-[46px] w-[46px]" viewBox="0 0 46 46" fill="#f2f2f2" stroke="#c6c6c6" stroke-width="1.500"><path d="M6 7H31L39 15V39H6Z"/><rect x="18" y="12" width="11" height="22" rx="5" fill="#c6c6c6"/><circle cx="23.500" cy="18" r="3" fill="#ddd"/><circle cx="23.500" cy="28" r="3" fill="#ddd"/></svg>
        <span class="mt-[2px] mb-[5px] h-px w-[45px] self-end bg-[#888]"></span>
        <svg class="h-[46px] w-[46px]" viewBox="0 0 46 46" fill="#f2f2f2" stroke="#c6c6c6" stroke-width="1.500"><path d="M9 39V16H16L18 18H28V24M9 39L16 24H37L30 39Z"/><path d="M20 24V14H17L22 7L28 14H24V24ZM31 7H35V17H38L33 24L27 17H31Z" fill="#d6d6d6"/></svg>
        <span class="mt-[6px] h-px w-[50px] self-start bg-[#888]"></span>
      </div>

      <!-- Property panel -->
      <aside class="flex w-[358px] shrink-0 flex-col border-r border-[#8b8b8b] bg-[#f7f7f7]">
        <div class="mr-[3px] flex h-[40px] items-center justify-center border-b border-[#c2c2c2] pt-1">
          <svg class="h-[14px] w-[14px]" viewBox="0 0 14 14"><circle cx="7" cy="7" r="5.500" fill="url(#knob)" stroke="#888"/></svg>
        </div>
        <div class="mt-[6px] mr-[3px] flex h-[44px]">
          <span class="w-1 border-b border-[#999]"></span>
          <button aria-label="特征树" class="flex w-[60px] items-center justify-center border-t border-r border-b border-[#8b8b8b] bg-[#d4d4d4]"><svg class="h-[42px] w-[42px]"><use href="#part"/></svg></button>
          <button aria-label="属性" class="flex w-[59px] items-center justify-center border-t border-[#8b8b8b]"><svg class="h-[36px] w-[36px]" viewBox="0 0 36 36"><path d="M1 2H35V33H1Z" fill="#f4f4f4" stroke="#333" stroke-width="1.500"/><path d="M1 2H35V7H1Z" fill="#2f86b0" stroke="#1d4f6c"/><path d="M5 9H14V15H5ZM5 17H14V22H5ZM5 24H14V30H5Z" fill="#6bb5dc" stroke="#1d5878"/><path d="M18 12H32M18 20H32M18 27H32" stroke="#222" stroke-width="1.500"/></svg></button>
          <button aria-label="配置" class="flex w-[61px] items-center justify-center border border-[#8b8b8b] bg-[#d4d4d4]"><svg class="h-[38px] w-[38px]" viewBox="0 0 38 38"><path d="M1 8V1H8M29 1H37V8M37 29V37H29M8 37H1V29" fill="none" stroke="#2b7aa5" stroke-width="1.500"/><path d="M5 9L19 4L31 8V28L16 33L5 30Z" fill="url(#gf)" stroke="#333"/><path d="M5 9L16 13L31 8M16 13V33" fill="none" stroke="#333"/><path d="M13 19L34 17V28H13Z" fill="url(#bf)" stroke="#1d5878"/></svg></button>
          <button aria-label="尺寸专家" class="flex w-[60px] items-center justify-center border-t border-r border-b border-[#8b8b8b] bg-[#d4d4d4]"><svg class="h-[38px] w-[38px]" viewBox="0 0 38 38" fill="none" stroke="#222" stroke-width="2.500"><circle cx="19" cy="19" r="13"/><path d="M19 1V37M1 19H37"/></svg></button>
          <button aria-label="外观" class="flex w-[60px] items-center justify-center border-t border-r border-b border-[#8b8b8b] bg-[#d4d4d4]"><svg class="h-[44px] w-[44px]"><use href="#ball"/><ellipse cx="29" cy="14" rx="4" ry="7" transform="rotate(-35 29 14)" fill="#111"/></svg></button>
          <span class="flex-1 border-b border-[#999]"></span>
        </div>
        <div class="mr-[7px] ml-[5px] flex flex-col">
          <div class="flex h-[58px] items-center pl-1">
            <svg class="ml-1 h-[36px] w-[36px]"><use href="#scissors"/></svg>
            <h1 class="ml-[9px] text-[26px] leading-8 font-bold text-[#222]">剪裁</h1>
            <button aria-label="帮助" class="mr-3 ml-auto flex h-7 w-7 items-center justify-center rounded-full border border-[#555] bg-[#eee] text-[22px] leading-none font-bold text-[#2b7aa5]">?</button>
          </div>
          <button aria-label="确定" class="ml-[9px] h-[44px] w-[26px]"><svg class="h-[26px] w-[26px]" viewBox="0 0 26 26"><path d="M2 12L9 19L23 5" fill="none" stroke="#2f9a12" stroke-width="3.500"/></svg></button>
          <section class="mt-[10px] border-t border-[#999]">
            <div class="flex h-[44px] items-center justify-between pr-[5px] pl-1 text-[22px] font-bold text-[#444]">
              <h2>信息</h2>
              <svg class="h-3 w-[18px]" viewBox="0 0 18 12"><path d="M1 10L9 2L17 10" fill="none" stroke="#777" stroke-width="3"/></svg>
            </div>
            <p class="h-[159px] bg-[#ffff80] pl-1 text-[22px] leading-[30px] whitespace-nowrap">若想剪裁实体，按住并在实体上拖<br>动您的光标，或单击一实体，然后<br>单击一边界实体或荧屏上任何地<br>方。若想延伸实体，按住 <span class="text-xl">shift</span> 键<br>然后在实体上拖动您的光标。</p>
          </section>
          <section class="mt-1 border-t border-[#999]">
            <div class="flex h-[44px] items-center justify-between pt-[2px] pr-[5px] pl-1 text-[22px] font-bold text-[#444]">
              <h2>选项<span class="text-xl">(O)</span></h2>
              <svg class="mb-1 h-3 w-[18px]" viewBox="0 0 18 12"><path d="M1 10L9 2L17 10" fill="none" stroke="#777" stroke-width="3"/></svg>
            </div>
            <div class="flex flex-col items-start gap-2 pl-1 text-[22px] leading-[30px] text-[#484848]">
              <button class="flex items-center gap-[5px]"><svg class="h-[44px] w-[44px]" viewBox="0 0 44 44" fill="none"><path d="M.5.5H43.500V43.500H.5Z" fill="#b1b1b1" stroke="#777"/><path d="M5 18H22M5 31H22M22 5V18" stroke="#d0d0d0" stroke-width="2" stroke-dasharray="5 2"/><path d="M22 39V18H39M22 31H39" stroke="#222" stroke-width="2"/><path d="M9 38C15 32 14 25 12 18S15 8 22 11S29 11 32 10" stroke="#2b7aa5" stroke-width="2"/></svg><span>强劲剪裁<span class="text-xl">(P)</span></span></button>
              <button class="flex items-center gap-[5px]"><svg class="h-[44px] w-[44px]" viewBox="0 0 44 44" fill="none"><path d="M.5.5H43.500V43.500H.5Z" fill="#fafafa" stroke="#999"/><path d="M5 22H20M22 5V20" stroke="#ccc" stroke-width="2" stroke-dasharray="4 1"/><path d="M22 39V22H39" stroke="#222" stroke-width="2"/><g fill="#3f9ac8" stroke="#153c52"><circle cx="31" cy="22" r="2.500"/><circle cx="22" cy="31" r="2.500"/></g></svg><span>边角<span class="text-xl">(C)</span></span></button>
              <button class="flex items-center gap-[5px]"><svg class="h-[44px] w-[44px]" viewBox="0 0 44 44" fill="none"><path d="M.5.5H43.500V43.500H.5Z" fill="#fafafa" stroke="#999"/><path d="M15 15H29M15 22H29M15 29H29" stroke="#ccc" stroke-width="2" stroke-dasharray="4 1"/><path d="M5 15H15M5 22H15M5 29H15M29 15H39M29 22H39M29 29H39" stroke="#222" stroke-width="2"/><path d="M15 5V39M29 5V39" stroke="#2b7299" stroke-width="2"/><g fill="#3f9ac8" stroke="#153c52"><circle cx="11" cy="15" r="2.500"/><circle cx="19" cy="22" r="2.500"/><circle cx="36" cy="29" r="2.500"/></g></svg><span>在内剪除<span class="text-xl">(I)</span></span></button>
              <button class="flex items-center gap-[5px]"><svg class="h-[44px] w-[44px]" viewBox="0 0 44 44" fill="none"><path d="M.5.5H43.500V43.500H.5Z" fill="#fafafa" stroke="#999"/><path d="M5 15H15M5 22H15M5 29H15M29 15H39M29 22H39M29 29H39" stroke="#ccc" stroke-width="2" stroke-dasharray="4 1"/><path d="M15 15H29M15 22H29M15 29H29" stroke="#222" stroke-width="2"/><path d="M15 5V39M29 5V39" stroke="#2b7299" stroke-width="2"/><g fill="#3f9ac8" stroke="#153c52"><circle cx="11" cy="15" r="2.500"/><circle cx="19" cy="22" r="2.500"/><circle cx="36" cy="29" r="2.500"/></g></svg><span>在外剪除<span class="text-xl">(O)</span></span></button>
              <button class="flex items-center gap-[5px]"><svg class="h-[44px] w-[44px]" viewBox="0 0 44 44" fill="none"><path d="M.5.5H43.500V43.500H.5Z" fill="#fafafa" stroke="#999"/><path d="M10 22H20" stroke="#ccc" stroke-width="2" stroke-dasharray="4 1"/><path d="M22 5V39M22 22H39" stroke="#222" stroke-width="2"/><circle cx="8" cy="22" r="2.500" fill="#3f9ac8" stroke="#153c52"/></svg><span>剪裁到最近端<span class="text-xl">(T)</span></span></button>
            </div>
            <div class="flex flex-col gap-[11px] pt-[9px] pl-1 text-[22px] leading-[30px]">
              <label class="flex items-center gap-[5px]"><input type="checkbox" class="h-[26px] w-[26px] shrink-0 appearance-none rounded-[5px] border-2 border-[#6c6c6c] bg-[#f3f3f3]"><span>将已剪裁的实体保留为构造几何体</span></label>
              <label class="flex items-center gap-[5px]"><input type="checkbox" class="h-[26px] w-[26px] shrink-0 appearance-none rounded-[5px] border-2 border-[#6c6c6c] bg-[#f3f3f3]"><span>忽略对构造几何体的剪裁</span></label>
            </div>
          </section>
        </div>
      </aside>

      <!-- Graphics area -->
      <main class="relative flex-1">
        <button aria-label="折叠面板" class="absolute top-[703px] -left-px flex h-[78px] w-[19px] items-center justify-center border-y border-r border-[#8b8b8b] bg-[#f7f7f7]"><svg class="h-[14px] w-[14px] shrink-0" viewBox="0 0 14 14"><circle cx="7" cy="7" r="5.500" fill="url(#knob)" stroke="#888"/></svg></button>
        <div class="flex h-[50px] items-center">
          <div class="flex w-[871px] shrink-0 items-center pt-[10px] pl-[14px]">
            <svg class="mb-3 h-[14px] w-[7px]" viewBox="0 0 7 14"><path d="M0 0L7 7L0 14Z" fill="#222"/></svg>
            <svg class="mb-2 ml-[19px] h-[40px] w-[40px]" viewBox="0 0 40 40"><path d="M13 6L21 2L29 6V15L37 20V31L29 37L15 28Z" fill="#fbcf2c" stroke="#80620c" stroke-width="1.300"/><path d="M13 6L21 9L29 6L21 2ZM20 19L29 15L37 20L29 25Z" fill="#fff0a0" stroke="#80620c" stroke-width="1.300"/><path d="M21 9V18M29 25V37" stroke="#80620c"/><rect x="2" y="10" width="14" height="29" rx="6" fill="#2b2b2b"/><circle cx="9" cy="18" r="4.500" fill="#c8201c"/><circle cx="9" cy="31" r="4.500" fill="#237a35"/></svg>
            <span class="ml-[6px] text-[23px] leading-[30px]">零件1 (...</span>
          </div>
          <div class="flex items-center text-[#9a9a9e]">
            <button aria-label="整屏显示全图" class="w-[46px]"><svg class="h-[46px] w-[46px]" viewBox="0 0 46 46"><path d="M7 37L16 27L20 30L11 39Z" fill="#8fc0da" stroke="#3b7698"/><circle cx="28" cy="18" r="12" fill="#f4fafd" stroke="#666" stroke-width="1.500"/><path d="M28 9l3 4h-6zM28 27l3-4h-6zM19 18l4 3v-6zM37 18l-4 3v-6z" fill="#555"/></svg></button>
            <button aria-label="局部放大" class="w-[46px]"><svg class="h-[46px] w-[46px]" viewBox="0 0 46 46"><path d="M18 8V5H41V28H36" fill="none" stroke="#555" stroke-width="1.500" stroke-dasharray="4 2"/><path d="M4 37L13 28L17 31L8 40Z" fill="#8fc0da" stroke="#3b7698"/><circle cx="26" cy="20" r="12" fill="#eaf6fc" stroke="#666" stroke-width="1.500"/></svg></button>
            <button aria-label="上一视图" class="w-[46px]"><svg class="h-[46px] w-[46px]" viewBox="0 0 46 46"><path d="M31 7C35 4 41 9 38 13L33 16L32 20L19 38C12 42 4 34 8 27L25 13L28 12Z" fill="#ececec" stroke="#666" stroke-width="1.500"/><ellipse cx="13" cy="33" rx="5" ry="7" transform="rotate(-35 13 33)" fill="#ccc" stroke="#666"/><path d="M22 28L30 20V25H40V32H30V37Z" fill="#6aaed0" stroke="#3b7698"/></svg></button>
            <button aria-label="剖面视图" class="w-[46px]"><svg class="h-[46px] w-[46px]" viewBox="0 0 46 46"><path d="M6 12C8 3 38 3 40 11V31L31 32V11C28 9 20 9 19 12V35L6 39Z" fill="#ececec" stroke="#666" stroke-width="1.500"/><path d="M19 12C20 9 28 9 31 11V31H19Z" fill="#ddd" stroke="#888"/><path d="M8 17L19 13V34L8 38ZM32 12L40 9V31L32 32Z" fill="#6aaed0" stroke="#3b7698"/><path d="M9 26L18 17M9 33L18 24M33 20L39 13M33 27L39 20" stroke="#2a5d7a" stroke-width="1.500"/></svg></button>
            <button aria-label="视图定向" class="w-[46px]"><svg class="h-[46px] w-[46px]" viewBox="0 0 46 46"><path d="M6 15L15 5H40V29L30 39M30 15L40 5M15 5V14" fill="none" stroke="#555" stroke-width="1.500"/><path d="M6 15H30V39H6Z" fill="#9fd0e8" stroke="#3b7698" stroke-width="1.500"/><path d="M23 6V12M39 22H34" stroke="#555" stroke-width="2"/><path d="M19 10H27L23 14ZM35 18V26L31 22Z" fill="#555"/></svg></button>
            <span class="flex w-5 justify-center"><svg class="h-[5px] w-[10px]"><use href="#dn"/></svg></span>
            <button aria-label="显示样式" class="w-[46px]"><svg class="h-[46px] w-[46px]" viewBox="0 0 46 46"><path d="M8 10L25 5L38 11V33L18 39L8 31Z" fill="#ececec" stroke="#666" stroke-width="1.500"/><path d="M8 10L25 5L31 8L28 13V36L18 39L8 31Z" fill="#a6d8ec"/><path d="M8 10L18 17V39L8 31Z" fill="#6aaed0"/><path d="M8 10L18 17L38 11M18 17V39M8 10V31L18 39L38 33" fill="none" stroke="#4b7f9a" stroke-width="1.500"/></svg></button>
            <span class="flex w-5 justify-center"><svg class="h-[5px] w-[10px]"><use href="#dn"/></svg></span>
            <button aria-label="隐藏项目" class="w-[46px]"><svg class="h-[46px] w-[46px]" viewBox="0 0 46 46"><path d="M5 22Q23 -1 41 22Q23 43 5 22Z" fill="#e6e6e6" stroke="#777" stroke-width="1.500"/><circle cx="23" cy="20" r="8.500" fill="#555"/><circle cx="20" cy="16" r="2.500" fill="#ddd"/><path d="M23 8V36" stroke="#444" stroke-width="2"/></svg></button>
            <span class="flex w-5 justify-center"><svg class="h-[5px] w-[10px]"><use href="#dn"/></svg></span>
            <button aria-label="编辑外观" class="w-[46px]"><svg class="h-[46px] w-[46px]" viewBox="0 0 46 46"><circle cx="21" cy="21" r="17" fill="#dcdcdc" stroke="#cfcfcf"/><circle cx="15" cy="14" r="7" fill="#eee"/><path d="M37 20L41 24L27 39L20 42L23 34Z" fill="#ececec" stroke="#ccc"/></svg></button>
            <button aria-label="应用布景" class="w-[46px]"><svg class="h-[46px] w-[46px]" viewBox="0 0 46 46"><path d="M5 20H41V41H5Z" fill="#666"/><path d="M6 22h5v4h-5zM36 22h4v4h-4zM11 27h6l-2 4h-6zM30 27h6l2 4h-6zM18 34h10l1 6h-12zM6 34h7l-2 6h-5zM34 34h6v6h-4z" fill="#e8e8e8"/><g class="opacity-90"><svg x="4" y="0" width="38" height="38"><use href="#ball"/></svg></g></svg></button>
            <span class="flex w-5 justify-center"><svg class="h-[5px] w-[10px]"><use href="#dn"/></svg></span>
            <button aria-label="视图设定" class="w-[46px]"><svg class="h-[46px] w-[46px]" viewBox="0 0 46 46"><path d="M7 10H39V31H7Z" fill="#dcdcdc" stroke="#666" stroke-width="2"/><path d="M23 31V37M17 37H29" stroke="#666" stroke-width="3"/></svg></button>
            <span class="flex w-5 justify-center"><svg class="h-[5px] w-[10px]"><use href="#dn"/></svg></span>
          </div>
        </div>
      </main>
    </div>
  </div>

  <!-- Model, sketch and annotations -->
  <svg class="pointer-events-none absolute top-0 left-0" width="2478" height="1608" viewBox="0 0 2478 1608">
    <path fill-rule="evenodd" fill="#676a79" d="M706 1159H1684V884A367 367 0 0 1 1944 533L1994 523L2051 518L2108 523L2164 536L2218 558L2267 588L2310 626L2348 669L2378 718L2400 772L2413 828L2418 884V1526H706ZM2051 702L2092 706L2131 720L2165 742L2194 771L2216 805L2230 843L2234 884V1037L2230 1078L2216 1117L2194 1151L2165 1180L2131 1202L2092 1216L2051 1220L2010 1216L1971 1202L1937 1180L1908 1151L1886 1117L1872 1078L1868 1037V884L1872 843L1886 805L1908 771L1937 742L1971 720L2010 706Z" stroke="#111" stroke-width="1.300"/>
    <path d="M1684.500 1159V1281.500H2418" fill="none" stroke="#111" stroke-width="1.300"/>
    <path d="M706 915L1944 533A367 367 0 0 0 1684 884V1159H706Z" fill="url(#pur)" stroke="#000" stroke-width="4" stroke-linejoin="round"/>
    <g><circle cx="707" cy="915" r="6.500"/><circle cx="1944" cy="534" r="6.500"/><circle cx="1685" cy="885" r="6.500"/><circle cx="1685" cy="1159" r="6.500"/><circle cx="707" cy="1159" r="6.500"/></g>
    <path d="M559 915H698M559 1526H698M566 915V1526" stroke="#000" stroke-width="2"/>
    <path d="M566 915L570 941H562ZM566 1526L570 1500H562Z" stroke="#000"/>
    <text transform="translate(559 1559) rotate(-90)" font-family="Open Sans,sans-serif" font-size="35">0.02</text>
    <path d="M2044 884.500H2059M2051.500 877V892" stroke="#000" stroke-width="2"/>
    <path d="M2051 1037V985M2051 1037H2030M2043 1037.500H2060M2051 1029V1046M2044 1030L2059 1045M2059 1030L2044 1045" stroke="#f00" stroke-width="2"/>
    <path d="M2051 972L2056 991H2047ZM2018 1037L2037 1032V1042Z" fill="#f00"/>
    <g fill="#92d400">
      <path d="M447 189L503 198L494 207L1002 519L1001 521L486 221L482 233Z"/>
      <path d="M2134 306L2136 306L2203 519L2217 514L2210 569L2176 525L2188 522Z"/>
      <path d="M742 1325L794 1300L792 1313L938 1309V1311L793 1329L797 1342Z"/>
      <text x="464" y="1303" font-family="Open Sans,sans-serif" font-size="50">20</text>
    </g>
    <g fill="#13adff">
      <path d="M634 716L636 715L678 832L692 829L689 885L653 838L665 836Z"/>
      <path d="M542 1325L501 1363L498 1351L466 1357V1355L492 1336L485 1326Z"/>
      <path d="M758 1533L716 1571L714 1559L650 1577V1575L708 1544L701 1534Z"/>
    </g>
    <g fill="#fb5454">
      <path d="M1540 504L1542 503L1585 566L1596 557L1603 614L1560 595L1573 587Z"/>
      <path d="M1765 707L1823 705L1815 718L1991 787L1990 789L1810 732L1808 744Z"/>
      <text x="1749" y="558" font-family="Noto Sans CJK SC,sans-serif" font-size="48">相切</text>
    </g>
    <g font-family="Roboto,Noto Sans CJK SC,sans-serif" font-size="48" font-weight="300">
      <text x="2102" y="1584" fill="#a8a8ac">CSDN @时间黑客</text>
      <text x="2101" y="1583" fill="#e2e2e4">CSDN @时间黑客</text>
    </g>
  </svg>
</div>
</body>
</html>
